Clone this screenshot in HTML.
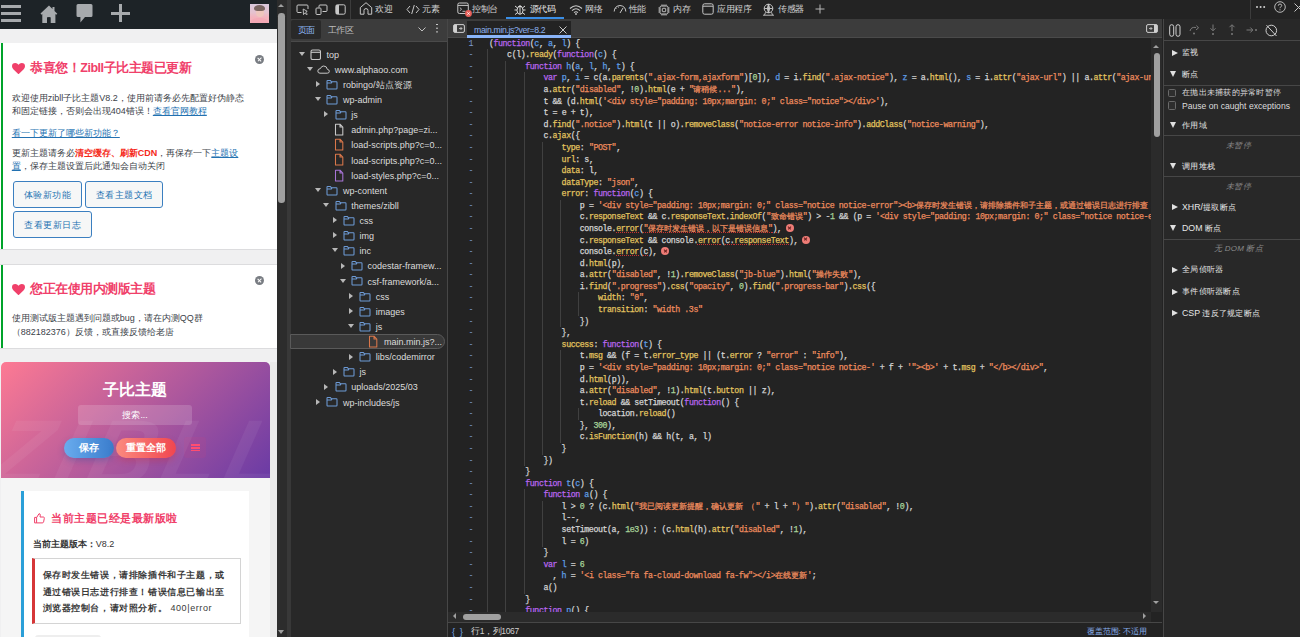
<!DOCTYPE html>
<html><head><meta charset="utf-8">
<style>
*{box-sizing:border-box}
s.cj{text-decoration:none}
html,body{margin:0;padding:0}
body{width:1300px;height:637px;overflow:hidden;position:relative;background:#282828;font-family:"Liberation Sans",sans-serif}
.a{position:absolute}
/* ---------- left page ---------- */
#page{position:absolute;left:0;top:0;width:277px;height:637px;background:#f0f0f1;overflow:hidden}
#adminbar{position:absolute;left:0;top:0;width:277px;height:28.6px;background:#1d2327}
.notice{position:absolute;left:0;width:277px;background:#fff;border-bottom:1px solid #dcdcde}
.notice .gb{position:absolute;left:0.7px;top:0;bottom:0;width:2.8px;background:#00a32a}
.ptxt{position:absolute;left:11.8px;font-size:9px;line-height:13px;color:#3c434a;white-space:nowrap}
.ntitle{position:absolute;left:30px;font-size:12.5px;letter-spacing:-0.45px;line-height:14px;color:#f0406a;font-weight:bold;white-space:nowrap}
.lnk{color:#2271b1;text-decoration:underline}
.btn{position:absolute;height:27px;border:1px solid #3b7fc0;border-radius:3px;background:#f6f7f7;color:#2271b1;font-size:9px;letter-spacing:0.5px;line-height:27px;text-align:center;white-space:nowrap}
.xc{position:absolute;width:9px;height:9px;border-radius:50%;background:#787c82}
.xc:before,.xc:after{content:"";position:absolute;left:4px;top:1.8px;width:1.2px;height:5.4px;background:#fff;transform:rotate(45deg)}
.xc:after{transform:rotate(-45deg)}
/* ---------- devtools ---------- */
#dt{position:absolute;left:291px;top:0;width:1009px;height:637px;background:#282828}
#topbar{position:absolute;left:0;top:0;width:1009px;height:19px;background:#232323}
.tab{position:absolute;top:3px;height:13px;font-size:8.5px;letter-spacing:-0.35px;line-height:13px;color:#cfcfcf;white-space:nowrap}
.ic{position:absolute}
#lp{position:absolute;left:0;top:19px;width:156.5px;height:618px;background:#282828}
#lptabs{position:absolute;left:0;top:0;width:156.5px;height:23px;background:#3c3c3c;border-bottom:1px solid #4a4a4a}
.tri{position:absolute;width:0;height:0}
.tri.d{border-left:3px solid transparent;border-right:3px solid transparent;border-top:4.4px solid #b8b8b8}
.tri.r{border-top:3px solid transparent;border-bottom:3px solid transparent;border-left:4.6px solid #b8b8b8}
.ti{position:absolute;line-height:0}
.ti svg{display:block}
.tt{position:absolute;font-size:9px;line-height:12px;color:#dcdcdc;white-space:nowrap}
.sel{position:absolute;left:-1px;width:155px;height:15.6px;background:#393939;border:1px solid #5a5a5a;border-radius:0 8px 8px 0}
#sep1{position:absolute;left:156px;top:19px;width:1px;height:618px;background:#474747}
#ed{position:absolute;left:157px;top:19px;width:715px;height:618px;background:#232323}
#edtabs{position:absolute;left:0;top:0;width:714px;height:19px;background:#3c3c3c;border-bottom:1px solid #4a4a4a}
#code{position:absolute;left:0;top:19px;width:703px;height:573.5px;overflow:hidden;background:#232323;font-family:"Liberation Mono",monospace;font-size:8.3px;letter-spacing:-0.435px}
.cl{position:absolute;height:11.58px;line-height:11.58px;white-space:pre;color:#d4d4d4;-webkit-text-stroke:0.25px}
.cl i{font-style:normal}
.cl s.cj{text-decoration:none;letter-spacing:0}
.cl u{text-decoration:underline dotted #c83232;text-decoration-thickness:1px;text-underline-offset:0.6px}
.ln{position:absolute;left:20.5px;height:11.58px;line-height:11.58px;color:#7d9bd0;font-family:"Liberation Mono",monospace;font-size:8.3px;letter-spacing:0}
.gd{position:absolute;width:1px;background:#404040}
.eb{display:inline-block;width:8px;height:8px;border-radius:50%;background:#ee7c76;vertical-align:-1px;position:relative;margin-left:-0.6px;-webkit-text-stroke:0}
.eb:before,.eb:after{content:"";position:absolute;left:3.5px;top:1.8px;width:1px;height:4.4px;background:#6b2020;transform:rotate(45deg)}
.eb:after{transform:rotate(-45deg)}
#sb{position:absolute;left:872px;top:19px;width:137px;height:618px;background:#282828;border-left:1px solid #474747}
.sh{position:absolute;left:18px;font-size:8.8px;letter-spacing:0;line-height:12px;color:#e6e6e6;white-space:nowrap}
.sh s.cj{letter-spacing:0.25px;font-size:8px}
.sh .tri{position:absolute;display:block}
.sh .tri.r{left:-10.1px;top:3.6px;border-top:3.9px solid transparent;border-bottom:3.9px solid transparent;border-left:6px solid #e0e0e0}
.sh .tri.d{left:-11.6px;top:3.3px;border-left:3.8px solid transparent;border-right:3.8px solid transparent;border-top:6px solid #e0e0e0}
.sline{position:absolute;left:0;width:137px;height:1px;background:#474747}
.sem{position:absolute;left:6px;width:137px;text-align:center;font-size:8px;letter-spacing:0.2px;line-height:12px;color:#8a8a8a;font-style:italic;white-space:nowrap}
.cb{position:absolute;left:3.5px;width:8.5px;height:8.5px;border:1px solid #6a6a6a;border-radius:1.5px;background:#2e2e2e}
</style></head><body>

<!-- ================= LEFT PAGE ================= -->
<div id="page">
  <div id="adminbar">
    <!-- hamburger -->
    <div class="a" style="left:1px;top:5.2px;width:20px;height:2.7px;background:#a7aaad"></div>
    <div class="a" style="left:1px;top:12.1px;width:20px;height:2.7px;background:#a7aaad"></div>
    <div class="a" style="left:1px;top:19px;width:20px;height:2.7px;background:#a7aaad"></div>
    <!-- home -->
    <svg class="a" style="left:39.5px;top:4.5px" width="18" height="18" viewBox="0 0 18 18"><path d="M9 0.5L0.5 8.6L1.6 9.7L2.3 9.1V18H7V12.5H10.5V18H15.4V9.1L16.2 9.8L17.3 8.7L14.5 6V2H12.5V4.1Z" fill="#a7aaad"/><rect x="7.4" y="12.2" width="3" height="5.8" fill="#1d2327"/></svg>
    <!-- bubble -->
    <svg class="a" style="left:75.5px;top:4px" width="17" height="19" viewBox="0 0 17 19"><path d="M2 0H15Q16.5 0 16.5 1.5V11.5Q16.5 13 15 13H9L4.4 18.6V13H2Q0.5 13 0.5 11.5V1.5Q0.5 0 2 0Z" fill="#a7aaad"/></svg>
    <!-- plus -->
    <div class="a" style="left:111px;top:11.6px;width:19px;height:3.2px;background:#a7aaad"></div>
    <div class="a" style="left:118.8px;top:4px;width:3.2px;height:18.2px;background:#a7aaad"></div>
    <!-- avatar -->
    <div class="a" style="left:250.3px;top:4px;width:19.2px;height:19px;background:linear-gradient(180deg,#d9c8dc 0%,#e6c2cf 45%,#f3b3bd 70%,#f5b0bb 100%);overflow:hidden">
      <div class="a" style="left:5.5px;top:4px;width:8.5px;height:8.5px;border-radius:50%;background:#efc6bd"></div>
      <div class="a" style="left:4px;top:0.6px;width:11px;height:6.8px;border-radius:55% 55% 35% 35%;background:#6e5a55;opacity:.9"></div>
      <div class="a" style="left:1px;top:14px;width:17px;height:8px;border-radius:45% 45% 0 0;background:#f4a9b6"></div>
    </div>
  </div>
  <div class="a" style="left:0;top:42.6px;width:277px;height:1px;background:#dcdcde"></div>

  <!-- notice 1 -->
  <div class="notice" style="top:43.3px;height:206.4px">
    <div class="gb"></div>
    <div class="xc" style="left:254.5px;top:11.5px"></div>
    <svg class="a" style="left:11.5px;top:19.3px" width="13" height="11.5" viewBox="0 0 13 11.5"><path d="M6.5 11.3L1.3 6.2Q0 4.9 0 3.3Q0 0 3.3 0Q5.3 0 6.5 1.8Q7.7 0 9.7 0Q13 0 13 3.3Q13 4.9 11.7 6.2Z" fill="#f0406a"/></svg>
    <div class="ntitle" style="top:17.6px">恭喜您！Zibll子比主题已更新</div>
    <div class="ptxt" style="top:48.8px">欢迎使用zibll子比主题V8.2，使用前请务必先配置好伪静态</div>
    <div class="ptxt" style="top:61.8px">和固定链接，否则会出现404错误！<span class="lnk">查看官网教程</span></div>
    <div class="ptxt" style="top:83.5px"><span class="lnk">看一下更新了哪些新功能？</span></div>
    <div class="ptxt" style="top:103.5px">更新主题请务必<b style="color:#f52a1a;font-weight:bold">清空缓存、刷新CDN</b>，再保存一下<span class="lnk">主题设</span></div>
    <div class="ptxt" style="top:116.5px"><span class="lnk">置</span>，保存主题设置后此通知会自动关闭</div>
    <div class="btn" style="left:13.3px;top:137.9px;width:68.3px">体验新功能</div>
    <div class="btn" style="left:85px;top:137.9px;width:78px">查看主题文档</div>
    <div class="btn" style="left:13.3px;top:168.1px;width:78.9px">查看更新日志</div>
  </div>

  <!-- notice 2 -->
  <div class="a" style="left:0;top:263.8px;width:277px;height:1px;background:#dcdcde"></div>
  <div class="notice" style="top:264.5px;height:84px">
    <div class="gb"></div>
    <div class="xc" style="left:254.5px;top:11.8px"></div>
    <svg class="a" style="left:11.7px;top:19.2px" width="13" height="11.5" viewBox="0 0 13 11.5"><path d="M6.5 11.3L1.3 6.2Q0 4.9 0 3.3Q0 0 3.3 0Q5.3 0 6.5 1.8Q7.7 0 9.7 0Q13 0 13 3.3Q13 4.9 11.7 6.2Z" fill="#f0406a"/></svg>
    <div class="ntitle" style="top:17.5px">您正在使用内测版主题</div>
    <div class="ptxt" style="top:47.8px">使用测试版主题遇到问题或bug，请在内测QQ群</div>
    <div class="ptxt" style="top:61.5px">（882182376）反馈，或直接反馈给老唐</div>
  </div>

  <!-- zibll panel -->
  <div class="a" style="left:1px;top:362px;width:268.6px;height:275px;background:#f5f5f5"></div>
  <div class="a" style="left:1px;top:362px;width:268.6px;height:115.7px;border-radius:5px 5px 0 0;overflow:hidden;background:linear-gradient(135deg,#fd7a93 0%,#6a3ba5 100%)">
    <div class="a" style="left:-6px;top:44px;font-size:92px;line-height:92px;font-weight:bold;font-style:italic;color:rgba(255,255,255,0.055);letter-spacing:7px;white-space:nowrap;transform:skewX(-14deg)">ZIBLL</div>
    <div class="a" style="left:0;width:268.6px;top:17.5px;text-align:center;font-size:16.2px;line-height:18px;font-weight:bold;color:#fff">子比主题</div>
    <div class="a" style="left:77px;top:42.8px;width:114px;height:20.2px;border-radius:3px;background:rgba(255,255,255,0.16);text-align:center;font-size:8.6px;line-height:20px;color:#fff">搜索...</div>
    <div class="a" style="left:63px;top:75.5px;width:49.6px;height:20.5px;border-radius:11px;background:linear-gradient(90deg,#69acee,#3a7ccc);box-shadow:0 3px 6px rgba(40,80,160,.35);text-align:center;font-size:10px;line-height:20.5px;color:#fff;font-weight:bold">保存</div>
    <div class="a" style="left:115.3px;top:75.5px;width:59.6px;height:20.5px;border-radius:11px;background:linear-gradient(90deg,#fb8a7e,#f04650);box-shadow:0 3px 6px rgba(200,50,60,.35);text-align:center;font-size:10px;line-height:20.5px;color:#fff;font-weight:bold">重置全部</div>
    <div class="a" style="left:183px;top:74.7px;width:22px;height:21.3px;border-radius:3px;background:rgba(255,60,100,0.08)">
      <div class="a" style="left:7px;top:7.6px;width:8.7px;height:1.5px;background:#ff4d70"></div>
      <div class="a" style="left:7px;top:10.4px;width:8.7px;height:1.5px;background:#ff4d70"></div>
      <div class="a" style="left:7px;top:13.2px;width:8.7px;height:1.5px;background:#ff4d70"></div>
    </div>
  </div>
  <!-- white card -->
  <div class="a" style="left:21px;top:491px;width:227.5px;height:150px;background:#fff">
    <div class="a" style="left:0;top:0;width:2.5px;height:150px;background:#2a9fd8"></div>
    <svg class="a" style="left:13.3px;top:22px" width="11" height="10.5" viewBox="0 0 11 10.5"><path d="M0.6 4.4H2.6V9.9H0.6Z M2.6 4.6L5 0.7Q6.4 0.7 6.3 2.2L6 4H9.4Q10.5 4.1 10.3 5.3L9.6 8.9Q9.3 9.9 8.3 9.9H2.6" fill="none" stroke="#f0406a" stroke-width="1" stroke-linejoin="round"/></svg>
    <div class="a" style="left:30px;top:20.8px;font-size:11px;letter-spacing:0.55px;line-height:13px;font-weight:bold;color:#f0406a;white-space:nowrap">当前主题已经是最新版啦</div>
    <div class="a" style="left:11.8px;top:47.6px;font-size:9px;line-height:11px;color:#333;white-space:nowrap;font-weight:bold">当前主题版本：<span style="font-weight:normal">V8.2</span></div>
    <div class="a" style="left:11px;top:67.4px;width:208.6px;height:65.8px;border:1px solid #d4d4d4;border-left:3px solid #d63638;background:#fff">
      <div class="a" style="left:7.5px;top:7.5px;font-size:9px;letter-spacing:0.6px;line-height:16.7px;color:#3a3a3a;font-weight:bold;white-space:nowrap">保存时发生错误，请排除插件和子主题，或<br>通过错误日志进行排查！错误信息已输出至<br>浏览器控制台，请对照分析。 <span style="font-weight:normal">400|error</span></div>
    </div>
    <div class="a" style="left:13.5px;top:143.5px;width:66.5px;height:10px;border-radius:3px;background:#eeeeee"></div>
  </div>
  <div class="a" style="left:269.6px;top:362px;width:7.4px;height:275px;background:#e9e9e9"></div>
</div>

<!-- page scrollbar -->
<div class="a" style="left:276.5px;top:0;width:10.5px;height:637px;background:#2c2c2c"></div>
<div class="a" style="left:278px;top:4.2px;width:0;height:0;border-left:3.5px solid transparent;border-right:3.5px solid transparent;border-bottom:3.8px solid #a0a0a0"></div>
<div class="a" style="left:278.4px;top:13.2px;width:6.6px;height:190px;border-radius:3.3px;background:#a0a0a0"></div>
<div class="a" style="left:278px;top:629.8px;width:0;height:0;border-left:3.5px solid transparent;border-right:3.5px solid transparent;border-top:4px solid #a0a0a0"></div>
<div class="a" style="left:287px;top:0;width:4.3px;height:637px;background:#383838"></div>

<!-- ================= DEVTOOLS ================= -->
<div id="dt">
  <div id="topbar">
    <!-- inspect -->
    <svg class="ic" style="left:4.5px;top:4px" width="13" height="11" viewBox="0 0 13 11"><path d="M5.5 8.5H2Q1 8.5 1 7.5V2Q1 1 2 1H11Q12 1 12 2V5" fill="none" stroke="#c8c8c8" stroke-width="1"/><path d="M7.2 5L7.5 10.6L8.8 9.1L10.7 10.7L11.4 9.9L9.6 8.3L11.2 7.3Z" fill="none" stroke="#c8c8c8" stroke-width="0.9" stroke-linejoin="round"/></svg>
    <!-- device -->
    <svg class="ic" style="left:23.5px;top:4px" width="13" height="11" viewBox="0 0 13 11"><path d="M4 3.5V2Q4 1 5 1H11Q12 1 12 2V6.5Q12 7.5 11 7.5H7.5" fill="none" stroke="#c8c8c8" stroke-width="1"/><rect x="1" y="4" width="5" height="6.5" rx="0.9" fill="none" stroke="#c8c8c8" stroke-width="1"/></svg>
    <!-- dock -->
    <svg class="ic" style="left:44px;top:4px" width="11" height="11" viewBox="0 0 11 11"><rect x="0.8" y="0.8" width="9.4" height="9.4" rx="1.5" fill="none" stroke="#c8c8c8" stroke-width="1"/><rect x="1" y="1" width="3" height="9" fill="#c8c8c8"/></svg>
    <div class="a" style="left:58.8px;top:0;width:1px;height:19px;background:#3c3c3c"></div>
    <!-- home -->
    <svg class="ic" style="left:68.3px;top:2px" width="14" height="13" viewBox="0 0 14 13"><path d="M1.3 12.2V5.6L7 0.7L12.7 5.6V12.2H9V8.4Q9 6.6 7 6.6Q5 6.6 5 8.4V12.2Z" fill="none" stroke="#c8c8c8" stroke-width="1" stroke-linejoin="round"/></svg>
    <div class="tab" style="left:84px">欢迎</div>
    <!-- </> -->
    <svg class="ic" style="left:114.5px;top:4px" width="14" height="11" viewBox="0 0 14 11"><path d="M4 2L1 5.5L4 9 M10 2L13 5.5L10 9 M8.3 1L5.7 10" fill="none" stroke="#c8c8c8" stroke-width="1"/></svg>
    <div class="tab" style="left:131px">元素</div>
    <!-- console -->
    <svg class="ic" style="left:165.5px;top:2px" width="13" height="13" viewBox="0 0 13 13"><rect x="0.8" y="1" width="10.5" height="10.5" rx="1.6" fill="none" stroke="#c8c8c8" stroke-width="1"/><path d="M1 3.4H11" stroke="#c8c8c8" stroke-width="1"/><path d="M2.8 5.6L4.6 7.2L2.8 8.8 M5.5 9.3H8.5" fill="none" stroke="#c8c8c8" stroke-width="0.9"/></svg>
    <svg class="ic" style="left:174.2px;top:10.1px" width="7" height="7" viewBox="0 0 7 7"><circle cx="3.5" cy="3.5" r="3.4" fill="#e8605a"/><path d="M2.3 2.3L4.7 4.7M4.7 2.3L2.3 4.7" stroke="#fff" stroke-width="0.8"/></svg>
    <div class="tab" style="left:181px">控制台</div>
    <!-- sources (bug) -->
    <svg class="ic" style="left:223px;top:3px" width="12" height="13" viewBox="0 0 12 13"><ellipse cx="6" cy="7.3" rx="3" ry="4" fill="none" stroke="#d8d8d8" stroke-width="1"/><path d="M4.2 3.7Q6 1.6 7.8 3.7 M3 7H0.5 M9 7H11.5 M3.3 4.8L1 3 M8.7 4.8L11 3 M3.3 9.8L1 11.6 M8.7 9.8L11 11.6 M6 4V11" fill="none" stroke="#d8d8d8" stroke-width="1"/></svg>
    <div class="tab" style="left:239px;color:#e8e8e8;letter-spacing:-0.75px">源代码</div>
    <div class="a" style="left:215px;top:17px;width:58px;height:2px;background:#3a8ee6"></div>
    <!-- network -->
    <svg class="ic" style="left:277.5px;top:3.5px" width="14" height="11" viewBox="0 0 14 11"><path d="M1 4.5Q7 -1 13 4.5 M3 6.6Q7 3 11 6.6 M5 8.6Q7 7 9 8.6" fill="none" stroke="#c8c8c8" stroke-width="1.1"/><circle cx="7" cy="10" r="0.9" fill="#c8c8c8"/></svg>
    <div class="tab" style="left:294px">网络</div>
    <!-- performance -->
    <svg class="ic" style="left:321.5px;top:4px" width="14" height="11" viewBox="0 0 14 11"><path d="M1.2 7.5Q1.5 2 7 1.5Q12.5 2 12.8 7.5 M7 9L10 4" fill="none" stroke="#c8c8c8" stroke-width="1"/><path d="M2.5 4L3.5 5 M5 2.5L5.5 3.6" stroke="#c8c8c8" stroke-width="0.9"/></svg>
    <div class="tab" style="left:337.5px">性能</div>
    <!-- memory -->
    <svg class="ic" style="left:366.5px;top:3.5px" width="12" height="12" viewBox="0 0 12 12"><rect x="2" y="2" width="8" height="8" rx="1.5" fill="none" stroke="#c8c8c8" stroke-width="1"/><rect x="4.3" y="4.3" width="3.4" height="3.4" rx="0.6" fill="none" stroke="#c8c8c8" stroke-width="0.9"/><path d="M4 0.3V2 M6 0.3V2 M8 0.3V2 M4 10V11.7 M6 10V11.7 M8 10V11.7 M0.3 4H2 M0.3 6H2 M0.3 8H2 M10 4H11.7 M10 6H11.7 M10 8H11.7" stroke="#c8c8c8" stroke-width="0.8"/></svg>
    <div class="tab" style="left:382px">内存</div>
    <!-- application -->
    <svg class="ic" style="left:410.5px;top:2.6px" width="12" height="12" viewBox="0 0 12 12"><rect x="0.8" y="0.8" width="10.4" height="10.4" rx="1.8" fill="none" stroke="#c8c8c8" stroke-width="1"/><path d="M1 3.2H11" stroke="#c8c8c8" stroke-width="1"/></svg>
    <div class="tab" style="left:426px">应用程序</div>
    <!-- sensors -->
    <svg class="ic" style="left:470.5px;top:2.5px" width="13" height="13" viewBox="0 0 13 13"><circle cx="6.5" cy="5.5" r="4.3" fill="none" stroke="#c8c8c8" stroke-width="1"/><path d="M2.2 5.5H10.8 M6.5 1.2V9.8 M6.5 1.2Q3.8 5.5 6.5 9.8 M6.5 1.2Q9.2 5.5 6.5 9.8 M1 12.2H12 M2.5 12.2L3.5 9.2 M10.5 12.2L9.5 9.2" fill="none" stroke="#c8c8c8" stroke-width="0.9"/></svg>
    <div class="tab" style="left:487px">传感器</div>
    <!-- plus -->
    <svg class="ic" style="left:523.5px;top:3.6px" width="10" height="10" viewBox="0 0 10 10"><path d="M5 0.5V9.5 M0.5 5H9.5" stroke="#b8b8b8" stroke-width="1"/></svg>
    <!-- right -->
    <div class="a" style="left:959px;top:0;width:1px;height:19px;background:#3c3c3c"></div>
    <div class="a" style="left:965px;top:5.6px;width:2px;height:2px;border-radius:1px;background:#d0d0d0;box-shadow:3.6px 0 0 #d0d0d0,7.2px 0 0 #d0d0d0"></div>
    <svg class="ic" style="left:982.5px;top:0.8px" width="12" height="12" viewBox="0 0 12 12"><circle cx="6" cy="6" r="5.3" fill="none" stroke="#c8c8c8" stroke-width="0.9"/><path d="M4.3 4.7Q4.3 3 6 3Q7.7 3 7.7 4.5Q7.7 5.5 6.6 6Q6 6.3 6 7.2" fill="none" stroke="#c8c8c8" stroke-width="0.9"/><circle cx="6" cy="8.8" r="0.6" fill="#c8c8c8"/></svg>
    <svg class="ic" style="left:1002.5px;top:2.5px" width="9" height="9" viewBox="0 0 9 9"><path d="M0.5 0.5L8.5 8.5 M8.5 0.5L0.5 8.5" stroke="#c8c8c8" stroke-width="1"/></svg>
  </div>

  <!-- left panel -->
  <div id="lp">
    <div id="lptabs">
      <div class="a" style="left:0;top:1.3px;width:30px;height:19px;background:#292929;border-radius:2px"></div>
      <div class="tab" style="left:6.5px;top:4.5px;color:#8cb4f0">页面</div>
      <div class="tab" style="left:36.5px;top:4.5px;color:#bdbdbd">工作区</div>
      <svg class="ic" style="left:127px;top:8px" width="8" height="5" viewBox="0 0 8 5"><path d="M0.5 0.5L4 4L7.5 0.5" fill="none" stroke="#c0c0c0" stroke-width="1"/></svg>
      <div class="a" style="left:145.3px;top:4.8px;width:1.6px;height:1.6px;background:#c8c8c8;box-shadow:0 3.7px 0 #c8c8c8,0 7.4px 0 #c8c8c8"></div>
    </div>
    <div class="a" style="left:0;top:22px;width:156.5px;height:596px">
<div class="tri d" style="left:7.60px;top:10.70px"></div>
<div class="ti" style="left:18.60px;top:7.50px"><svg width="11" height="11" viewBox="0 0 11 11"><rect x="1" y="1" width="9.5" height="9.5" rx="1.6" fill="none" stroke="#c8c8c8" stroke-width="1.1"/><path d="M1 3.3H10.5" stroke="#c8c8c8" stroke-width="1.1"/></svg></div>
<div class="tt" style="left:35.60px;top:7.60px">top</div>
<div class="tri d" style="left:15.85px;top:25.83px"></div>
<div class="ti" style="left:26.00px;top:23.63px"><svg width="13" height="9" viewBox="0 0 13 9"><path d="M3 8.2H10.3Q12.3 8.2 12.3 6.3Q12.3 4.5 10.4 4.4Q9.8 1 6.7 1Q4.3 1 3.4 3.6Q0.8 3.9 0.8 6Q0.8 8.2 3 8.2Z" fill="none" stroke="#c8c8c8" stroke-width="1"/></svg></div>
<div class="tt" style="left:43.80px;top:22.73px">www.alphaoo.com</div>
<div class="tri r" style="left:25.10px;top:40.16px"></div>
<div class="ti" style="left:35.20px;top:37.76px"><svg width="12" height="11" viewBox="0 0 12 11"><path d="M1 2.2Q1 1.5 1.7 1.5H4.3L5.3 2.7H10.3Q11 2.7 11 3.4V9.3Q11 10 10.3 10H1.7Q1 10 1 9.3Z M1 4H5.3L6 2.9" fill="none" stroke="#6d9bd6" stroke-width="1.05"/></svg></div>
<div class="tt" style="left:52.00px;top:37.86px">robingo/<s class="cj">站点资源</s></div>
<div class="tri d" style="left:24.10px;top:56.09px"></div>
<div class="ti" style="left:35.20px;top:52.89px"><svg width="12" height="11" viewBox="0 0 12 11"><path d="M1 2.2Q1 1.5 1.7 1.5H4.3L5.3 2.7H10.3Q11 2.7 11 3.4V9.3Q11 10 10.3 10H1.7Q1 10 1 9.3Z M1 4H5.3L6 2.9" fill="none" stroke="#6d9bd6" stroke-width="1.05"/></svg></div>
<div class="tt" style="left:52.00px;top:52.99px">wp-admin</div>
<div class="tri r" style="left:33.35px;top:70.42px"></div>
<div class="ti" style="left:43.50px;top:68.02px"><svg width="12" height="11" viewBox="0 0 12 11"><path d="M1 2.2Q1 1.5 1.7 1.5H4.3L5.3 2.7H10.3Q11 2.7 11 3.4V9.3Q11 10 10.3 10H1.7Q1 10 1 9.3Z M1 4H5.3L6 2.9" fill="none" stroke="#6d9bd6" stroke-width="1.05"/></svg></div>
<div class="tt" style="left:60.20px;top:68.12px">js</div>
<div class="ti" style="left:43.30px;top:82.15px"><svg width="10" height="13" viewBox="0 0 10 13"><path d="M1.5 1.2H6L8.8 4V11.9H1.5Z M6 1.2V4H8.8" fill="none" stroke="#c8c8c8" stroke-width="1.05" stroke-linejoin="round"/></svg></div>
<div class="tt" style="left:60.20px;top:83.25px">admin.php?page=zi...</div>
<div class="ti" style="left:43.30px;top:97.28px"><svg width="10" height="13" viewBox="0 0 10 13"><path d="M1.5 1.2H6L8.8 4V11.9H1.5Z M6 1.2V4H8.8" fill="none" stroke="#d9774a" stroke-width="1.05" stroke-linejoin="round"/></svg></div>
<div class="tt" style="left:60.20px;top:98.38px">load-scripts.php?c=0...</div>
<div class="ti" style="left:43.30px;top:112.41px"><svg width="10" height="13" viewBox="0 0 10 13"><path d="M1.5 1.2H6L8.8 4V11.9H1.5Z M6 1.2V4H8.8" fill="none" stroke="#d9774a" stroke-width="1.05" stroke-linejoin="round"/></svg></div>
<div class="tt" style="left:60.20px;top:113.51px">load-scripts.php?c=0...</div>
<div class="ti" style="left:43.30px;top:127.54px"><svg width="10" height="13" viewBox="0 0 10 13"><path d="M1.5 1.2H6L8.8 4V11.9H1.5Z M6 1.2V4H8.8" fill="none" stroke="#a874d6" stroke-width="1.05" stroke-linejoin="round"/></svg></div>
<div class="tt" style="left:60.20px;top:128.64px">load-styles.php?c=0...</div>
<div class="tri d" style="left:24.10px;top:146.87px"></div>
<div class="ti" style="left:35.20px;top:143.67px"><svg width="12" height="11" viewBox="0 0 12 11"><path d="M1 2.2Q1 1.5 1.7 1.5H4.3L5.3 2.7H10.3Q11 2.7 11 3.4V9.3Q11 10 10.3 10H1.7Q1 10 1 9.3Z M1 4H5.3L6 2.9" fill="none" stroke="#6d9bd6" stroke-width="1.05"/></svg></div>
<div class="tt" style="left:52.00px;top:143.77px">wp-content</div>
<div class="tri d" style="left:32.35px;top:162.00px"></div>
<div class="ti" style="left:43.50px;top:158.80px"><svg width="12" height="11" viewBox="0 0 12 11"><path d="M1 2.2Q1 1.5 1.7 1.5H4.3L5.3 2.7H10.3Q11 2.7 11 3.4V9.3Q11 10 10.3 10H1.7Q1 10 1 9.3Z M1 4H5.3L6 2.9" fill="none" stroke="#6d9bd6" stroke-width="1.05"/></svg></div>
<div class="tt" style="left:60.20px;top:158.90px">themes/zibll</div>
<div class="tri r" style="left:41.60px;top:176.33px"></div>
<div class="ti" style="left:51.80px;top:173.93px"><svg width="12" height="11" viewBox="0 0 12 11"><path d="M1 2.2Q1 1.5 1.7 1.5H4.3L5.3 2.7H10.3Q11 2.7 11 3.4V9.3Q11 10 10.3 10H1.7Q1 10 1 9.3Z M1 4H5.3L6 2.9" fill="none" stroke="#6d9bd6" stroke-width="1.05"/></svg></div>
<div class="tt" style="left:68.40px;top:174.03px">css</div>
<div class="tri r" style="left:41.60px;top:191.46px"></div>
<div class="ti" style="left:51.80px;top:189.06px"><svg width="12" height="11" viewBox="0 0 12 11"><path d="M1 2.2Q1 1.5 1.7 1.5H4.3L5.3 2.7H10.3Q11 2.7 11 3.4V9.3Q11 10 10.3 10H1.7Q1 10 1 9.3Z M1 4H5.3L6 2.9" fill="none" stroke="#6d9bd6" stroke-width="1.05"/></svg></div>
<div class="tt" style="left:68.40px;top:189.16px">img</div>
<div class="tri d" style="left:40.60px;top:207.39px"></div>
<div class="ti" style="left:51.80px;top:204.19px"><svg width="12" height="11" viewBox="0 0 12 11"><path d="M1 2.2Q1 1.5 1.7 1.5H4.3L5.3 2.7H10.3Q11 2.7 11 3.4V9.3Q11 10 10.3 10H1.7Q1 10 1 9.3Z M1 4H5.3L6 2.9" fill="none" stroke="#6d9bd6" stroke-width="1.05"/></svg></div>
<div class="tt" style="left:68.40px;top:204.29px">inc</div>
<div class="tri r" style="left:49.85px;top:221.72px"></div>
<div class="ti" style="left:60.10px;top:219.32px"><svg width="12" height="11" viewBox="0 0 12 11"><path d="M1 2.2Q1 1.5 1.7 1.5H4.3L5.3 2.7H10.3Q11 2.7 11 3.4V9.3Q11 10 10.3 10H1.7Q1 10 1 9.3Z M1 4H5.3L6 2.9" fill="none" stroke="#6d9bd6" stroke-width="1.05"/></svg></div>
<div class="tt" style="left:76.60px;top:219.42px">codestar-framew...</div>
<div class="tri d" style="left:48.85px;top:237.65px"></div>
<div class="ti" style="left:60.10px;top:234.45px"><svg width="12" height="11" viewBox="0 0 12 11"><path d="M1 2.2Q1 1.5 1.7 1.5H4.3L5.3 2.7H10.3Q11 2.7 11 3.4V9.3Q11 10 10.3 10H1.7Q1 10 1 9.3Z M1 4H5.3L6 2.9" fill="none" stroke="#6d9bd6" stroke-width="1.05"/></svg></div>
<div class="tt" style="left:76.60px;top:234.55px">csf-framework/a...</div>
<div class="tri r" style="left:58.10px;top:251.98px"></div>
<div class="ti" style="left:68.40px;top:249.58px"><svg width="12" height="11" viewBox="0 0 12 11"><path d="M1 2.2Q1 1.5 1.7 1.5H4.3L5.3 2.7H10.3Q11 2.7 11 3.4V9.3Q11 10 10.3 10H1.7Q1 10 1 9.3Z M1 4H5.3L6 2.9" fill="none" stroke="#6d9bd6" stroke-width="1.05"/></svg></div>
<div class="tt" style="left:84.80px;top:249.68px">css</div>
<div class="tri r" style="left:58.10px;top:267.11px"></div>
<div class="ti" style="left:68.40px;top:264.71px"><svg width="12" height="11" viewBox="0 0 12 11"><path d="M1 2.2Q1 1.5 1.7 1.5H4.3L5.3 2.7H10.3Q11 2.7 11 3.4V9.3Q11 10 10.3 10H1.7Q1 10 1 9.3Z M1 4H5.3L6 2.9" fill="none" stroke="#6d9bd6" stroke-width="1.05"/></svg></div>
<div class="tt" style="left:84.80px;top:264.81px">images</div>
<div class="tri d" style="left:57.10px;top:283.04px"></div>
<div class="ti" style="left:68.40px;top:279.84px"><svg width="12" height="11" viewBox="0 0 12 11"><path d="M1 2.2Q1 1.5 1.7 1.5H4.3L5.3 2.7H10.3Q11 2.7 11 3.4V9.3Q11 10 10.3 10H1.7Q1 10 1 9.3Z M1 4H5.3L6 2.9" fill="none" stroke="#6d9bd6" stroke-width="1.05"/></svg></div>
<div class="tt" style="left:84.80px;top:279.94px">js</div>
<div class="sel" style="top:292.57px"></div>
<div class="ti" style="left:76.90px;top:293.97px"><svg width="10" height="13" viewBox="0 0 10 13"><path d="M1.5 1.2H6L8.8 4V11.9H1.5Z M6 1.2V4H8.8" fill="none" stroke="#d9774a" stroke-width="1.05" stroke-linejoin="round"/></svg></div>
<div class="tt" style="left:93.00px;top:295.07px">main.min.js?...</div>
<div class="tri r" style="left:58.10px;top:312.50px"></div>
<div class="ti" style="left:68.40px;top:310.10px"><svg width="12" height="11" viewBox="0 0 12 11"><path d="M1 2.2Q1 1.5 1.7 1.5H4.3L5.3 2.7H10.3Q11 2.7 11 3.4V9.3Q11 10 10.3 10H1.7Q1 10 1 9.3Z M1 4H5.3L6 2.9" fill="none" stroke="#6d9bd6" stroke-width="1.05"/></svg></div>
<div class="tt" style="left:84.80px;top:310.20px">libs/codemirror</div>
<div class="tri r" style="left:41.60px;top:327.63px"></div>
<div class="ti" style="left:51.80px;top:325.23px"><svg width="12" height="11" viewBox="0 0 12 11"><path d="M1 2.2Q1 1.5 1.7 1.5H4.3L5.3 2.7H10.3Q11 2.7 11 3.4V9.3Q11 10 10.3 10H1.7Q1 10 1 9.3Z M1 4H5.3L6 2.9" fill="none" stroke="#6d9bd6" stroke-width="1.05"/></svg></div>
<div class="tt" style="left:68.40px;top:325.33px">js</div>
<div class="tri r" style="left:33.35px;top:342.76px"></div>
<div class="ti" style="left:43.50px;top:340.36px"><svg width="12" height="11" viewBox="0 0 12 11"><path d="M1 2.2Q1 1.5 1.7 1.5H4.3L5.3 2.7H10.3Q11 2.7 11 3.4V9.3Q11 10 10.3 10H1.7Q1 10 1 9.3Z M1 4H5.3L6 2.9" fill="none" stroke="#6d9bd6" stroke-width="1.05"/></svg></div>
<div class="tt" style="left:60.20px;top:340.46px">uploads/2025/03</div>
<div class="tri r" style="left:25.10px;top:357.89px"></div>
<div class="ti" style="left:35.20px;top:355.49px"><svg width="12" height="11" viewBox="0 0 12 11"><path d="M1 2.2Q1 1.5 1.7 1.5H4.3L5.3 2.7H10.3Q11 2.7 11 3.4V9.3Q11 10 10.3 10H1.7Q1 10 1 9.3Z M1 4H5.3L6 2.9" fill="none" stroke="#6d9bd6" stroke-width="1.05"/></svg></div>
<div class="tt" style="left:52.00px;top:355.59px">wp-includes/js</div>
    </div>
  </div>
  <div id="sep1"></div>

  <!-- editor -->
  <div id="ed">
    <div id="edtabs">
      <svg class="ic" style="left:4.5px;top:4.5px" width="12" height="9" viewBox="0 0 12 9"><rect x="0.6" y="0.6" width="10.8" height="7.8" rx="1.4" fill="none" stroke="#d0d0d0" stroke-width="1"/><rect x="0.8" y="0.8" width="3.2" height="7.4" fill="#d0d0d0"/><path d="M6 4.5H9 M7.5 3L9 4.5L7.5 6" fill="none" stroke="#d0d0d0" stroke-width="0.8"/></svg>
      <div class="a" style="left:19px;top:1.5px;width:103.5px;height:17.5px;background:#232323"></div>
      <div class="tab" style="left:26px;top:4.5px;color:#8ab0ee;font-size:8.7px">main.min.js?ver=8.2</div>
      <svg class="ic" style="left:110.5px;top:7px" width="8" height="8" viewBox="0 0 8 8"><path d="M0.5 0.5L7.5 7.5 M7.5 0.5L0.5 7.5" stroke="#c8c8c8" stroke-width="1"/></svg>
      <div class="a" style="left:19px;top:16.4px;width:103.5px;height:2.2px;background:#8ab4f8"></div>
      <svg class="ic" style="left:697.5px;top:4.8px" width="12" height="9" viewBox="0 0 12 9"><rect x="0.6" y="0.6" width="10.8" height="7.8" rx="1.4" fill="none" stroke="#d0d0d0" stroke-width="1"/><rect x="8" y="0.8" width="3.2" height="7.4" fill="#d0d0d0"/><path d="M3 4.5H6 M4.5 3L6 4.5L4.5 6" fill="none" stroke="#d0d0d0" stroke-width="0.8"/></svg>
    </div>
    <div id="code">
<div class="gd" style="left:39.30px;top:11.29px;height:567.42px"></div>
<div class="gd" style="left:57.48px;top:22.87px;height:555.84px"></div>
<div class="gd" style="left:75.66px;top:34.45px;height:393.72px"></div>
<div class="gd" style="left:75.66px;top:451.33px;height:104.22px"></div>
<div class="gd" style="left:93.84px;top:103.93px;height:312.66px"></div>
<div class="gd" style="left:93.84px;top:462.91px;height:46.32px"></div>
<div class="gd" style="left:112.02px;top:161.83px;height:127.38px"></div>
<div class="gd" style="left:112.02px;top:312.37px;height:92.64px"></div>
<div class="gd" style="left:130.20px;top:254.47px;height:23.16px"></div>
<div class="gd" style="left:130.20px;top:370.27px;height:11.58px"></div>
<div class="cl" style="top:-0.29px;left:40.90px">(<i style="color:#b866ee">function</i>(<i style="color:#5f9de3">c</i>, <i style="color:#5f9de3">a</i>, <i style="color:#5f9de3">l</i>) {</div>
<div class="ln" style="top:-0.29px">1</div>
<div class="cl" style="top:11.29px;left:59.08px"><i style="color:#d4d4d4">c</i>(<i style="color:#d4d4d4">l</i>).<i style="color:#e2c35f">ready</i>(<i style="color:#b866ee">function</i>(<i style="color:#5f9de3">c</i>) {</div>
<div class="ln" style="top:11.29px">-</div>
<div class="cl" style="top:22.87px;left:77.26px"><i style="color:#b866ee">function</i> <i style="color:#5f9de3">h</i>(<i style="color:#5f9de3">a</i>, <i style="color:#5f9de3">l</i>, <i style="color:#5f9de3">h</i>, <i style="color:#5f9de3">t</i>) {</div>
<div class="ln" style="top:22.87px">-</div>
<div class="cl" style="top:34.45px;left:95.44px"><i style="color:#b866ee">var</i> <i style="color:#5f9de3">p</i>, <i style="color:#5f9de3">i</i> = <i style="color:#d4d4d4">c</i>(<i style="color:#d4d4d4">a</i>.<i style="color:#e2c35f">parents</i>(<i style="color:#ee8c5e">".ajax-form,ajaxform"</i>)[<i style="color:#a8d49a">0</i>]), <i style="color:#5f9de3">d</i> = <i style="color:#d4d4d4">i</i>.<i style="color:#e2c35f">find</i>(<i style="color:#ee8c5e">".ajax-notice"</i>), <i style="color:#5f9de3">z</i> = <i style="color:#d4d4d4">a</i>.<i style="color:#e2c35f">html</i>(), <i style="color:#5f9de3">s</i> = <i style="color:#d4d4d4">i</i>.<i style="color:#e2c35f">attr</i>(<i style="color:#ee8c5e">"ajax-url"</i>) || <i style="color:#d4d4d4">a</i>.<i style="color:#e2c35f">attr</i>(<i style="color:#ee8c5e">"ajax-url"</i>) || <i style="color:#ee8c5e">""</i></div>
<div class="ln" style="top:34.45px">-</div>
<div class="cl" style="top:46.03px;left:95.44px"><i style="color:#d4d4d4">a</i>.<i style="color:#e2c35f">attr</i>(<i style="color:#ee8c5e">"disabled"</i>, !<i style="color:#a8d49a">0</i>).<i style="color:#e2c35f">html</i>(<i style="color:#d4d4d4">e</i> + <i style="color:#ee8c5e">"<s class="cj">请稍候</s>..."</i>),</div>
<div class="ln" style="top:46.03px">-</div>
<div class="cl" style="top:57.61px;left:95.44px"><i style="color:#d4d4d4">t</i> &amp;&amp; (<i style="color:#d4d4d4">d</i>.<i style="color:#e2c35f">html</i>(<i style="color:#ee8c5e">'&lt;div style="padding: 10px;margin: 0;" class="notice"&gt;&lt;/div&gt;'</i>),</div>
<div class="ln" style="top:57.61px">-</div>
<div class="cl" style="top:69.19px;left:95.44px"><i style="color:#d4d4d4">t</i> = <i style="color:#d4d4d4">e</i> + <i style="color:#d4d4d4">t</i>),</div>
<div class="ln" style="top:69.19px">-</div>
<div class="cl" style="top:80.77px;left:95.44px"><i style="color:#d4d4d4">d</i>.<i style="color:#e2c35f">find</i>(<i style="color:#ee8c5e">".notice"</i>).<i style="color:#e2c35f">html</i>(<i style="color:#d4d4d4">t</i> || <i style="color:#d4d4d4">o</i>).<i style="color:#e2c35f">removeClass</i>(<i style="color:#ee8c5e">"notice-error notice-info"</i>).<i style="color:#e2c35f">addClass</i>(<i style="color:#ee8c5e">"notice-warning"</i>),</div>
<div class="ln" style="top:80.77px">-</div>
<div class="cl" style="top:92.35px;left:95.44px"><i style="color:#d4d4d4">c</i>.<i style="color:#e2c35f">ajax</i>({</div>
<div class="ln" style="top:92.35px">-</div>
<div class="cl" style="top:103.93px;left:113.62px"><i style="color:#e2c35f">type</i>: <i style="color:#ee8c5e">"POST"</i>,</div>
<div class="ln" style="top:103.93px">-</div>
<div class="cl" style="top:115.51px;left:113.62px"><i style="color:#e2c35f">url</i>: <i style="color:#d4d4d4">s</i>,</div>
<div class="ln" style="top:115.51px">-</div>
<div class="cl" style="top:127.09px;left:113.62px"><i style="color:#e2c35f">data</i>: <i style="color:#d4d4d4">l</i>,</div>
<div class="ln" style="top:127.09px">-</div>
<div class="cl" style="top:138.67px;left:113.62px"><i style="color:#e2c35f">dataType</i>: <i style="color:#ee8c5e">"json"</i>,</div>
<div class="ln" style="top:138.67px">-</div>
<div class="cl" style="top:150.25px;left:113.62px"><i style="color:#e2c35f">error</i>: <i style="color:#b866ee">function</i>(<i style="color:#5f9de3">c</i>) {</div>
<div class="ln" style="top:150.25px">-</div>
<div class="cl" style="top:161.83px;left:131.80px"><i style="color:#d4d4d4">p</i> = <i style="color:#ee8c5e">'&lt;div style="padding: 10px;margin: 0;" class="notice notice-error"&gt;&lt;b&gt;<s class="cj">保存时发生错误，请排除插件和子主题，或通过错误日志进行排查！</s></i></div>
<div class="ln" style="top:161.83px">-</div>
<div class="cl" style="top:173.41px;left:131.80px"><i style="color:#d4d4d4">c</i>.<i style="color:#e2c35f">responseText</i> &amp;&amp; <i style="color:#d4d4d4">c</i>.<i style="color:#e2c35f">responseText</i>.<i style="color:#e2c35f">indexOf</i>(<i style="color:#ee8c5e">"<s class="cj">致命错误</s>"</i>) &gt; -<i style="color:#a8d49a">1</i> &amp;&amp; (<i style="color:#d4d4d4">p</i> = <i style="color:#ee8c5e">'&lt;div style="padding: 10px;margin: 0;" class="notice notice-error"&gt;</i></div>
<div class="ln" style="top:173.41px">-</div>
<div class="cl" style="top:184.99px;left:131.80px"><i style="color:#d4d4d4">console</i>.<u><i style="color:#e2c35f">error</i>(<i style="color:#ee8c5e">"<s class="cj">保存时发生错误，以下是错误信息</s>"</i>)</u>, <b class="eb"></b></div>
<div class="ln" style="top:184.99px">-</div>
<div class="cl" style="top:196.57px;left:131.80px"><i style="color:#d4d4d4">c</i>.<i style="color:#e2c35f">responseText</i> &amp;&amp; <i style="color:#d4d4d4">console</i>.<u><i style="color:#e2c35f">error</i>(<i style="color:#d4d4d4">c</i>.<i style="color:#e2c35f">responseText</i>)</u>, <b class="eb"></b></div>
<div class="ln" style="top:196.57px">-</div>
<div class="cl" style="top:208.15px;left:131.80px"><i style="color:#d4d4d4">console</i>.<u><i style="color:#e2c35f">error</i>(<i style="color:#d4d4d4">c</i>)</u>, <b class="eb"></b></div>
<div class="ln" style="top:208.15px">-</div>
<div class="cl" style="top:219.73px;left:131.80px"><i style="color:#d4d4d4">d</i>.<i style="color:#e2c35f">html</i>(<i style="color:#d4d4d4">p</i>),</div>
<div class="ln" style="top:219.73px">-</div>
<div class="cl" style="top:231.31px;left:131.80px"><i style="color:#d4d4d4">a</i>.<i style="color:#e2c35f">attr</i>(<i style="color:#ee8c5e">"disabled"</i>, !<i style="color:#a8d49a">1</i>).<i style="color:#e2c35f">removeClass</i>(<i style="color:#ee8c5e">"jb-blue"</i>).<i style="color:#e2c35f">html</i>(<i style="color:#ee8c5e">"<s class="cj">操作失败</s>"</i>),</div>
<div class="ln" style="top:231.31px">-</div>
<div class="cl" style="top:242.89px;left:131.80px"><i style="color:#d4d4d4">i</i>.<i style="color:#e2c35f">find</i>(<i style="color:#ee8c5e">".progress"</i>).<i style="color:#e2c35f">css</i>(<i style="color:#ee8c5e">"opacity"</i>, <i style="color:#a8d49a">0</i>).<i style="color:#e2c35f">find</i>(<i style="color:#ee8c5e">".progress-bar"</i>).<i style="color:#e2c35f">css</i>({</div>
<div class="ln" style="top:242.89px">-</div>
<div class="cl" style="top:254.47px;left:149.98px"><i style="color:#e2c35f">width</i>: <i style="color:#ee8c5e">"0"</i>,</div>
<div class="ln" style="top:254.47px">-</div>
<div class="cl" style="top:266.05px;left:149.98px"><i style="color:#e2c35f">transition</i>: <i style="color:#ee8c5e">"width .3s"</i></div>
<div class="ln" style="top:266.05px">-</div>
<div class="cl" style="top:277.63px;left:131.80px">})</div>
<div class="ln" style="top:277.63px">-</div>
<div class="cl" style="top:289.21px;left:113.62px">},</div>
<div class="ln" style="top:289.21px">-</div>
<div class="cl" style="top:300.79px;left:113.62px"><i style="color:#e2c35f">success</i>: <i style="color:#b866ee">function</i>(<i style="color:#5f9de3">t</i>) {</div>
<div class="ln" style="top:300.79px">-</div>
<div class="cl" style="top:312.37px;left:131.80px"><i style="color:#d4d4d4">t</i>.<i style="color:#e2c35f">msg</i> &amp;&amp; (<i style="color:#d4d4d4">f</i> = <i style="color:#d4d4d4">t</i>.<i style="color:#e2c35f">error_type</i> || (<i style="color:#d4d4d4">t</i>.<i style="color:#e2c35f">error</i> ? <i style="color:#ee8c5e">"error"</i> : <i style="color:#ee8c5e">"info"</i>),</div>
<div class="ln" style="top:312.37px">-</div>
<div class="cl" style="top:323.95px;left:131.80px"><i style="color:#d4d4d4">p</i> = <i style="color:#ee8c5e">'&lt;div style="padding: 10px;margin: 0;" class="notice notice-'</i> + <i style="color:#d4d4d4">f</i> + <i style="color:#ee8c5e">'"&gt;&lt;b&gt;'</i> + <i style="color:#d4d4d4">t</i>.<i style="color:#e2c35f">msg</i> + <i style="color:#ee8c5e">"&lt;/b&gt;&lt;/div&gt;"</i>,</div>
<div class="ln" style="top:323.95px">-</div>
<div class="cl" style="top:335.53px;left:131.80px"><i style="color:#d4d4d4">d</i>.<i style="color:#e2c35f">html</i>(<i style="color:#d4d4d4">p</i>)),</div>
<div class="ln" style="top:335.53px">-</div>
<div class="cl" style="top:347.11px;left:131.80px"><i style="color:#d4d4d4">a</i>.<i style="color:#e2c35f">attr</i>(<i style="color:#ee8c5e">"disabled"</i>, !<i style="color:#a8d49a">1</i>).<i style="color:#e2c35f">html</i>(<i style="color:#d4d4d4">t</i>.<i style="color:#e2c35f">button</i> || <i style="color:#d4d4d4">z</i>),</div>
<div class="ln" style="top:347.11px">-</div>
<div class="cl" style="top:358.69px;left:131.80px"><i style="color:#d4d4d4">t</i>.<i style="color:#e2c35f">reload</i> &amp;&amp; <i style="color:#d4d4d4">setTimeout</i>(<i style="color:#b866ee">function</i>() {</div>
<div class="ln" style="top:358.69px">-</div>
<div class="cl" style="top:370.27px;left:149.98px"><i style="color:#d4d4d4">location</i>.<i style="color:#e2c35f">reload</i>()</div>
<div class="ln" style="top:370.27px">-</div>
<div class="cl" style="top:381.85px;left:131.80px">}, <i style="color:#a8d49a">300</i>),</div>
<div class="ln" style="top:381.85px">-</div>
<div class="cl" style="top:393.43px;left:131.80px"><i style="color:#d4d4d4">c</i>.<i style="color:#e2c35f">isFunction</i>(<i style="color:#d4d4d4">h</i>) &amp;&amp; <i style="color:#d4d4d4">h</i>(<i style="color:#d4d4d4">t</i>, <i style="color:#d4d4d4">a</i>, <i style="color:#d4d4d4">l</i>)</div>
<div class="ln" style="top:393.43px">-</div>
<div class="cl" style="top:405.01px;left:113.62px">}</div>
<div class="ln" style="top:405.01px">-</div>
<div class="cl" style="top:416.59px;left:95.44px">})</div>
<div class="ln" style="top:416.59px">-</div>
<div class="cl" style="top:428.17px;left:77.26px">}</div>
<div class="ln" style="top:428.17px">-</div>
<div class="cl" style="top:439.75px;left:77.26px"><i style="color:#b866ee">function</i> <i style="color:#5f9de3">t</i>(<i style="color:#5f9de3">c</i>) {</div>
<div class="ln" style="top:439.75px">-</div>
<div class="cl" style="top:451.33px;left:95.44px"><i style="color:#b866ee">function</i> <i style="color:#5f9de3">a</i>() {</div>
<div class="ln" style="top:451.33px">-</div>
<div class="cl" style="top:462.91px;left:113.62px"><i style="color:#d4d4d4">l</i> &gt; <i style="color:#a8d49a">0</i> ? (<i style="color:#d4d4d4">c</i>.<i style="color:#e2c35f">html</i>(<i style="color:#ee8c5e">"<s class="cj">我已阅读更新提醒，确认更新</s> <s class="cj">（</s>"</i> + <i style="color:#d4d4d4">l</i> + <i style="color:#ee8c5e">"<s class="cj">）</s>"</i>).<i style="color:#e2c35f">attr</i>(<i style="color:#ee8c5e">"disabled"</i>, !<i style="color:#a8d49a">0</i>),</div>
<div class="ln" style="top:462.91px">-</div>
<div class="cl" style="top:474.49px;left:113.62px"><i style="color:#d4d4d4">l</i>--,</div>
<div class="ln" style="top:474.49px">-</div>
<div class="cl" style="top:486.07px;left:113.62px"><i style="color:#d4d4d4">setTimeout</i>(<i style="color:#d4d4d4">a</i>, <i style="color:#a8d49a">1e3</i>)) : (<i style="color:#d4d4d4">c</i>.<i style="color:#e2c35f">html</i>(<i style="color:#d4d4d4">h</i>).<i style="color:#e2c35f">attr</i>(<i style="color:#ee8c5e">"disabled"</i>, !<i style="color:#a8d49a">1</i>),</div>
<div class="ln" style="top:486.07px">-</div>
<div class="cl" style="top:497.65px;left:113.62px"><i style="color:#d4d4d4">l</i> = <i style="color:#a8d49a">6</i>)</div>
<div class="ln" style="top:497.65px">-</div>
<div class="cl" style="top:509.23px;left:95.44px">}</div>
<div class="ln" style="top:509.23px">-</div>
<div class="cl" style="top:520.81px;left:95.44px"><i style="color:#b866ee">var</i> <i style="color:#5f9de3">l</i> = <i style="color:#a8d49a">6</i></div>
<div class="ln" style="top:520.81px">-</div>
<div class="cl" style="top:532.39px;left:104.53px">, <i style="color:#5f9de3">h</i> = <i style="color:#ee8c5e">'&lt;i class="fa fa-cloud-download fa-fw"&gt;&lt;/i&gt;<s class="cj">在线更新</s>'</i>;</div>
<div class="ln" style="top:532.39px">-</div>
<div class="cl" style="top:543.97px;left:95.44px"><i style="color:#d4d4d4">a</i>()</div>
<div class="ln" style="top:543.97px">-</div>
<div class="cl" style="top:555.55px;left:77.26px">}</div>
<div class="ln" style="top:555.55px">-</div>
<div class="cl" style="top:567.13px;left:77.26px"><i style="color:#b866ee">function</i> <i style="color:#5f9de3">p</i>() {</div>
<div class="ln" style="top:567.13px">-</div>
    </div>
    <!-- v scrollbar -->
    <div class="a" style="left:703px;top:19px;width:11px;height:573.5px;background:#2b2b2b"></div>
    <div class="a" style="left:705px;top:25.5px;width:0;height:0;border-left:3.2px solid transparent;border-right:3.2px solid transparent;border-bottom:3.4px solid #a0a0a0"></div>
    <div class="a" style="left:705.5px;top:34px;width:6px;height:84px;border-radius:3px;background:#a0a0a0"></div>
    <div class="a" style="left:705px;top:582px;width:0;height:0;border-left:3.4px solid transparent;border-right:3.4px solid transparent;border-top:3.6px solid #a0a0a0"></div>
    <!-- h scrollbar -->
    <div class="a" style="left:0;top:592.5px;width:703px;height:10px;background:#2b2b2b"></div>
    <div class="a" style="left:5px;top:594px;width:0;height:0;border-top:3.3px solid transparent;border-bottom:3.3px solid transparent;border-right:3.8px solid #a0a0a0"></div>
    <div class="a" style="left:14.5px;top:594.5px;width:38px;height:6.3px;border-radius:3.2px;background:#a0a0a0"></div>
    <div class="a" style="left:694.5px;top:594px;width:0;height:0;border-top:3.3px solid transparent;border-bottom:3.3px solid transparent;border-left:3.8px solid #a0a0a0"></div>
    <!-- status -->
    <div class="a" style="left:0;top:603px;width:714px;height:1px;background:#474747"></div>
    <div class="tab" style="left:4px;top:605.5px;color:#6f9fe0;font-size:9.5px;letter-spacing:1px">{ }</div>
    <div class="tab" style="left:23px;top:606px;color:#cfcfcf">行1，列1067</div>
    <div class="tab" style="left:638.5px;top:606px;color:#8ab0ee;font-size:8px;letter-spacing:0">覆盖范围: 不适用</div>
  </div>

  <!-- debugger sidebar -->
  <div id="sb">
    <div class="a" style="left:0;top:0;width:136px;height:21.5px;background:#282828"></div>
    <svg class="ic" style="left:5px;top:4.5px" width="12" height="13" viewBox="0 0 12 13"><rect x="0.7" y="0.7" width="4" height="11.6" rx="2" fill="none" stroke="#d0d0d0" stroke-width="1"/><rect x="7" y="0.7" width="4" height="11.6" rx="2" fill="none" stroke="#d0d0d0" stroke-width="1"/></svg>
    <svg class="ic" style="left:24.5px;top:6px" width="11" height="10" viewBox="0 0 11 10"><path d="M1 6Q2 1.5 7 2.5 M7.5 0.5L9.5 3L7 4.8" fill="none" stroke="#7a7a7a" stroke-width="1"/><circle cx="5" cy="8.6" r="1" fill="#7a7a7a"/></svg>
    <svg class="ic" style="left:45px;top:5px" width="8" height="12" viewBox="0 0 8 12"><path d="M4 0.5V6.5 M1.5 4.3L4 6.8L6.5 4.3" fill="none" stroke="#7a7a7a" stroke-width="1"/><circle cx="4" cy="10" r="1" fill="#7a7a7a"/></svg>
    <svg class="ic" style="left:64px;top:5px" width="8" height="12" viewBox="0 0 8 12"><path d="M4 7V1 M1.5 3.2L4 0.7L6.5 3.2" fill="none" stroke="#7a7a7a" stroke-width="1"/><circle cx="4" cy="10" r="1" fill="#7a7a7a"/></svg>
    <svg class="ic" style="left:81.5px;top:7px" width="12" height="8" viewBox="0 0 12 8"><path d="M0.5 4H6.5 M4.3 1.5L6.8 4L4.3 6.5" fill="none" stroke="#7a7a7a" stroke-width="1"/><circle cx="10" cy="4" r="1" fill="#7a7a7a"/></svg>
    <svg class="ic" style="left:100.5px;top:4.5px" width="13" height="13" viewBox="0 0 13 13"><circle cx="6.3" cy="6.5" r="5.3" fill="none" stroke="#d0d0d0" stroke-width="1"/><path d="M1.5 1.2L11.5 12" stroke="#d0d0d0" stroke-width="1"/></svg>
    <div class="sline" style="top:20.7px"></div>

    <div class="sh" style="margin-top:-0.4px;top:27.5px"><span class="tri r"></span><s class="cj">监视</s></div>
    <div class="sh" style="margin-top:-0.4px;top:49.5px"><span class="tri d"></span><s class="cj">断点</s></div>
    <div class="sline" style="top:65.5px"></div>
    <div class="cb" style="top:69.5px"></div>
    <div class="a" style="left:18px;top:68px;font-size:8px;letter-spacing:0.25px;line-height:12px;color:#dcdcdc;white-space:nowrap">在抛出未捕获的异常时暂停</div>
    <div class="cb" style="top:82px"></div>
    <div class="a" style="left:18px;top:80.5px;font-size:8.6px;line-height:12px;color:#dcdcdc;white-space:nowrap">Pause on caught exceptions</div>
    <div class="sh" style="margin-top:-0.4px;top:100px"><span class="tri d"></span><s class="cj">作用域</s></div>
    <div class="sline" style="top:115.5px"></div>
    <div class="sem" style="top:121px">未暂停</div>
    <div class="sh" style="margin-top:-0.4px;top:141px"><span class="tri d"></span><s class="cj">调用堆栈</s></div>
    <div class="sline" style="top:156.5px"></div>
    <div class="sem" style="top:162px">未暂停</div>
    <div class="sh" style="margin-top:-0.4px;top:182px"><span class="tri r"></span>XHR/<s class="cj">提取断点</s></div>
    <div class="sh" style="margin-top:-0.4px;top:203.5px"><span class="tri d"></span>DOM <s class="cj">断点</s></div>
    <div class="sline" style="top:219.5px"></div>
    <div class="sem" style="top:224px">无 DOM 断点</div>
    <div class="sh" style="margin-top:-0.4px;top:244.5px"><span class="tri r"></span><s class="cj">全局侦听器</s></div>
    <div class="sh" style="margin-top:-0.4px;top:266.5px"><span class="tri r"></span><s class="cj">事件侦听器断点</s></div>
    <div class="sh" style="margin-top:-0.4px;top:288px"><span class="tri r"></span>CSP <s class="cj">违反了规定断点</s></div>
  </div>
</div>
</body></html>
